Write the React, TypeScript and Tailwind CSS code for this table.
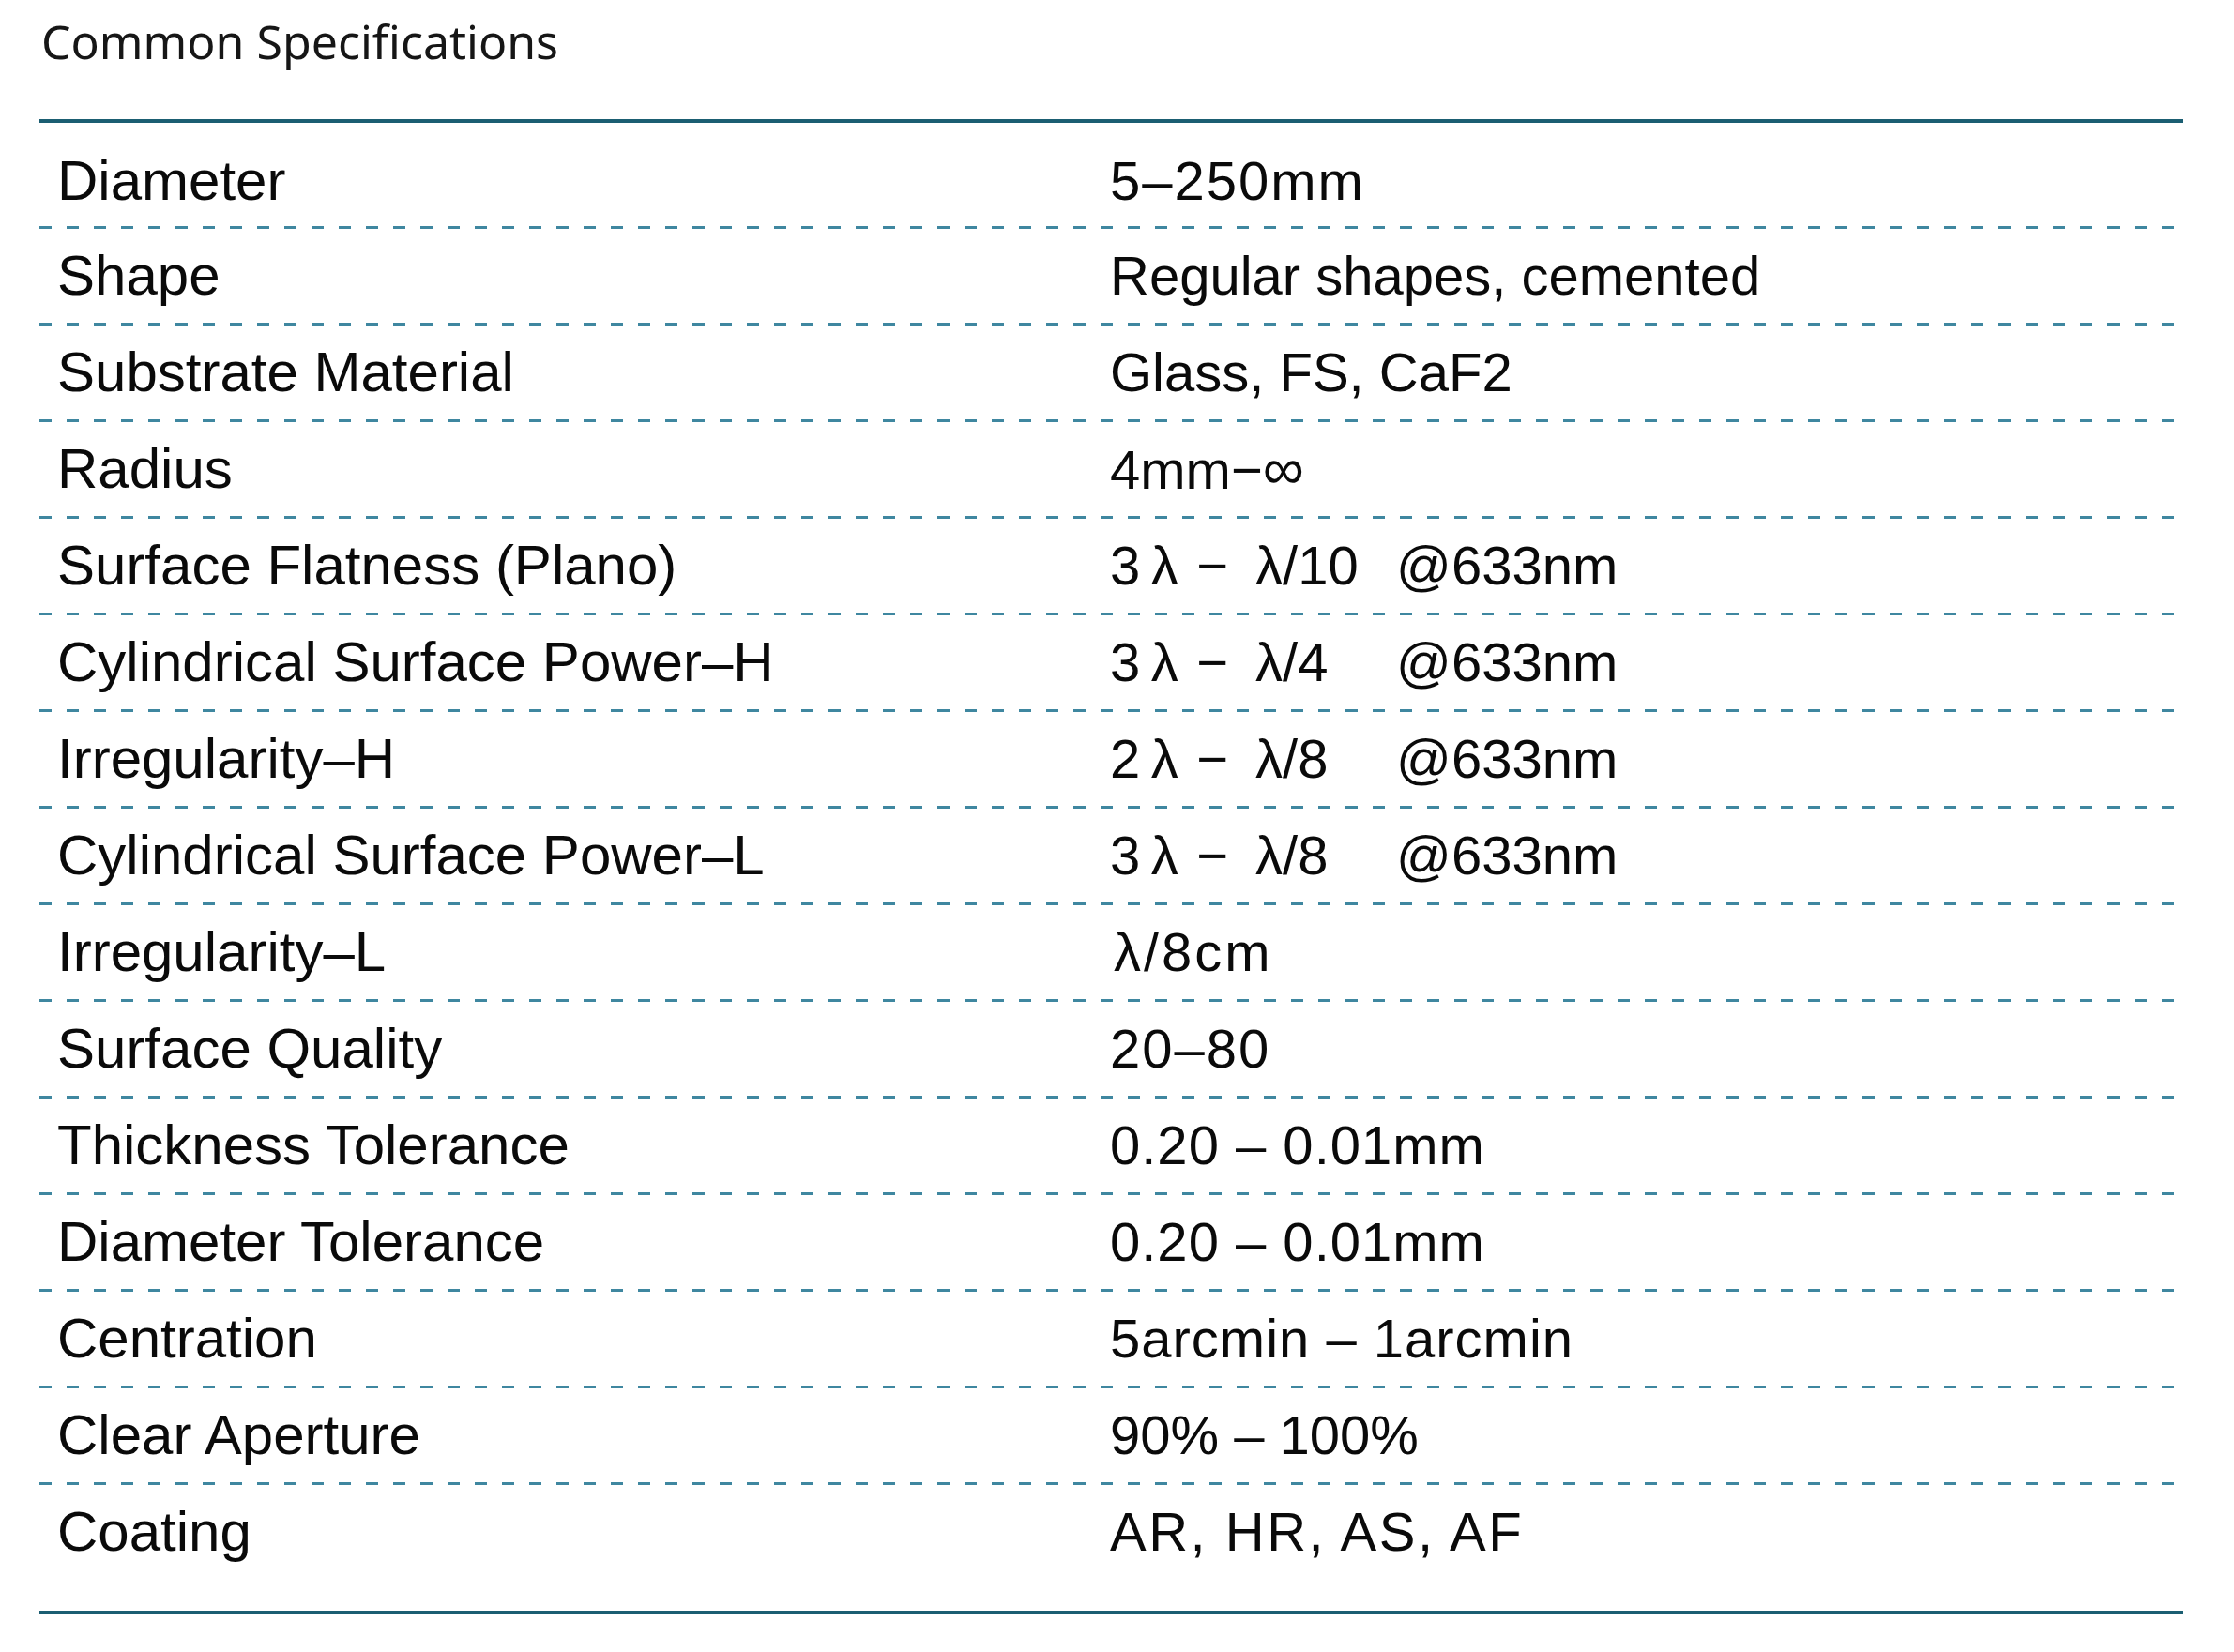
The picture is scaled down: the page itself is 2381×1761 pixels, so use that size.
import React from 'react';

type Spec = { label: string; value: React.ReactNode; tight?: string };

const wave = (a: string, b: string) => (
  <span className="flex">
    <span className="w-[305px]">{a}</span>
    <span>{b}</span>
  </span>
);

const specs: Spec[] = [
  { label: 'Diameter', value: '5\u2013250mm', tight: 'tracking-[2px]' },
  { label: 'Shape', value: 'Regular shapes, cemented' },
  { label: 'Substrate Material', value: 'Glass, FS, CaF2' },
  { label: 'Radius', value: <span>4mm{'\u2212'}<span className="text-[62px]">∞</span></span> },
  { label: 'Surface Flatness (Plano)', value: wave('3\u2009λ\u2004\u2212\u2002λ/10', '@633nm') },
  { label: 'Cylindrical Surface Power\u2013H', value: wave('3\u2009λ\u2004\u2212\u2002λ/4', '@633nm') },
  { label: 'Irregularity\u2013H', value: wave('2\u2009λ\u2004\u2212\u2002λ/8', '@633nm') },
  { label: 'Cylindrical Surface Power\u2013L', value: wave('3\u2009λ\u2004\u2212\u2002λ/8', '@633nm') },
  { label: 'Irregularity\u2013L', value: 'λ/8cm', tight: 'tracking-[3px] pl-[4px]' },
  { label: 'Surface Quality', value: '20\u201380', tight: 'tracking-[2px]' },
  { label: 'Thickness Tolerance', value: '0.20 \u2013 0.01mm', tight: 'tracking-[1px]' },
  { label: 'Diameter Tolerance', value: '0.20 \u2013 0.01mm', tight: 'tracking-[1px]' },
  { label: 'Centration', value: '5arcmin \u2013 1arcmin', tight: 'tracking-[1px]' },
  { label: 'Clear Aperture', value: '90% \u2013 100%' },
  { label: 'Coating', value: 'AR, HR, AS, AF', tight: 'tracking-[2.5px]' },
];

const Dashes = () => (
  <div className="h-[3px] w-full bg-[linear-gradient(to_right,#3f87a0_13px,transparent_13px)] bg-[length:29px_3px] bg-repeat-x" />
);

export default function App() {
  return (
    <div className="min-h-screen bg-white px-[42px] pt-[14px]">
      <h2 className="pl-[2px] font-['Noto_Sans',sans-serif] text-[50px] leading-[60px] text-[#161616]">
        Common Specifications
      </h2>
      <div className="mt-[53px] w-[2285px] border-t-4 border-[#1b5e72] font-['Liberation_Sans',Arial,sans-serif] text-[#0a0a0a]">
        {specs.map((s, i) => {
          const first = i === 0;
          const last = i === specs.length - 1;
          return (
            <div key={s.label}>
              <div className={`flex items-center pl-[19px] ${first ? 'h-[110px] pt-[14px]' : 'h-[100px]'}`}>
                <span className="w-[1122px] text-[60px] leading-none">{s.label}</span>
                <span className={`text-[58px] leading-none ${s.tight ?? ''}`}>{s.value}</span>
              </div>
              {last ? <div className="h-[34px]" /> : <Dashes />}
            </div>
          );
        })}
        <div className="h-[4px] w-full bg-[#1b5e72]" />
      </div>
    </div>
  );
}
